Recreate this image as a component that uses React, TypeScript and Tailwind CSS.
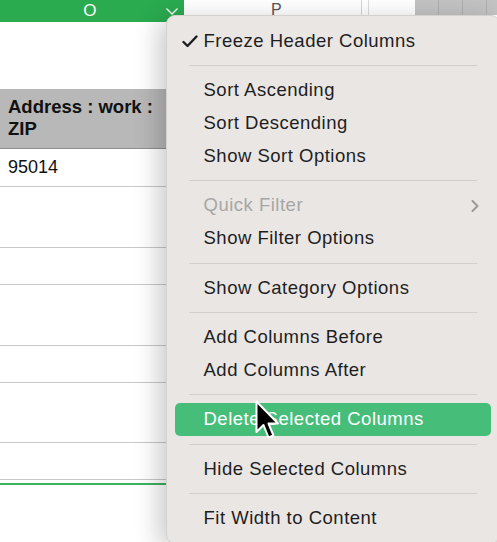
import React from "react";

const font = { fontFamily: '"Liberation Sans", Arial, Helvetica, sans-serif' };

function Sep() {
  return (
    <div className="h-[16.3px] flex items-center px-[22px]">
      <div className="h-px w-full bg-[#d2cfcd]" />
    </div>
  );
}

function Item({ children, disabled, highlight, check, submenu }: { children: React.ReactNode; disabled?: boolean; highlight?: boolean; check?: boolean; submenu?: boolean }) {
  if (highlight) {
    return (
      <div className="h-[33px] mx-[8px] rounded-[5px] bg-[#46be79] text-white flex items-center pl-[28.5px]">
        {children}
      </div>
    );
  }
  return (
    <div className={`relative h-[33px] flex items-center pl-[36.5px] ${disabled ? "text-[#a8a6a5]" : "text-[#1e1e1e]"}`}>
      {check && (
        <svg className="absolute left-[15px] top-[10px]" width="16" height="13" viewBox="0 0 16 13">
          <path d="M1.5 7 L5.5 11 L14.5 1.5" fill="none" stroke="#1e1e1e" strokeWidth="2.4" strokeLinecap="round" strokeLinejoin="round" />
        </svg>
      )}
      {children}
      {submenu && (
        <svg className="absolute left-[303px] top-[10px]" width="10" height="14" viewBox="0 0 10 14">
          <path d="M2.5 2 L7.5 7 L2.5 12" fill="none" stroke="#9c9a99" strokeWidth="2" strokeLinecap="round" strokeLinejoin="round" />
        </svg>
      )}
    </div>
  );
}

export default function App() {
  return (
    <div className="relative w-[497px] h-[542px] overflow-hidden bg-white" style={font}>
      {/* column header bar */}
      <div className="flex h-[22px]">
        <div className="relative w-[187px] bg-[#2aab50] text-white flex items-center justify-center text-[17px] leading-none">
          <span className="mr-[4px] -mt-[1px]">O</span>
          <svg className="absolute left-[165px] top-[7px]" width="14" height="9" viewBox="0 0 14 9">
            <path d="M1.5 1.5 L7 7 L12.5 1.5" fill="none" stroke="#ffffff" strokeWidth="1.3" />
          </svg>
        </div>
        <div className="w-[181px] border-r border-[#d4d4d4] text-[#555] flex items-start justify-center pt-[1px] text-[16px] leading-none">
          <span className="ml-[8px] mt-[1px]">P</span>
        </div>
        <div className="w-[7px] border-r border-[#dcdcdc]" />
        <div className="w-[47px]" />
        <div className="flex h-[15px]">
          <div className="w-[24px] bg-[#c3c3c3] border-r border-[#aeaeae]" />
          <div className="w-[24px] bg-[#c3c3c3] border-r border-[#aeaeae]" />
          <div className="w-[24px] bg-[#c3c3c3] border-r border-[#aeaeae]" />
          <div className="w-[10px] bg-[#c3c3c3]" />
        </div>
      </div>

      {/* column body */}
      <div className="w-[187px] text-[18px] text-[#111]">
        <div className="h-[67px]" />
        <div className="h-[60px] bg-[#b8b8b8] border-b border-[#8f8f8f] px-[8px] pt-[7px] font-bold leading-[22px] text-[18.5px]">
          Address : work :<br />ZIP
        </div>
        <div className="h-[38px] border-b border-[#c8c8c8] px-[8px] flex items-center">95014</div>
        <div className="h-[61px] border-b border-[#c8c8c8]" />
        <div className="h-[37px] border-b border-[#c8c8c8]" />
        <div className="h-[61px] border-b border-[#c8c8c8]" />
        <div className="h-[37px] border-b border-[#c8c8c8]" />
        <div className="h-[60px] border-b border-[#c8c8c8]" />
        <div className="h-[37px] border-b border-[#c8c8c8]" />
        <div className="h-[3px]" />
        <div className="h-[2px] bg-[#39b360]" />
      </div>

      {/* context menu */}
      <div className="absolute left-[166px] top-[15px] w-[334px] rounded-[9px] bg-[#e9e6e4] border border-[#d3d0ce] shadow-[-8px_4px_24px_rgba(0,0,0,0.2)] pt-[8.5px] pb-[8px] text-[18.5px] tracking-[0.5px] leading-none">
        <Item check>Freeze Header Columns</Item>
        <Sep />
        <Item>Sort Ascending</Item>
        <Item>Sort Descending</Item>
        <Item>Show Sort Options</Item>
        <Sep />
        <Item disabled submenu>Quick Filter</Item>
        <Item>Show Filter Options</Item>
        <Sep />
        <Item>Show Category Options</Item>
        <Sep />
        <Item>Add Columns Before</Item>
        <Item>Add Columns After</Item>
        <Sep />
        <Item highlight>Delete Selected Columns</Item>
        <Sep />
        <Item>Hide Selected Columns</Item>
        <Sep />
        <Item>Fit Width to Content</Item>
      </div>

      {/* mouse cursor */}
      <svg className="absolute left-[254px] top-[399px]" width="26" height="44" viewBox="0 0 26 44">
        <path d="M2.5 2.5 L2.5 33 L9.5 26 L14.5 38.5 L19.5 36.5 L14.5 24.5 L24 24.5 Z" fill="#000" stroke="#fff" strokeWidth="2" strokeLinejoin="round" />
      </svg>
    </div>
  );
}
